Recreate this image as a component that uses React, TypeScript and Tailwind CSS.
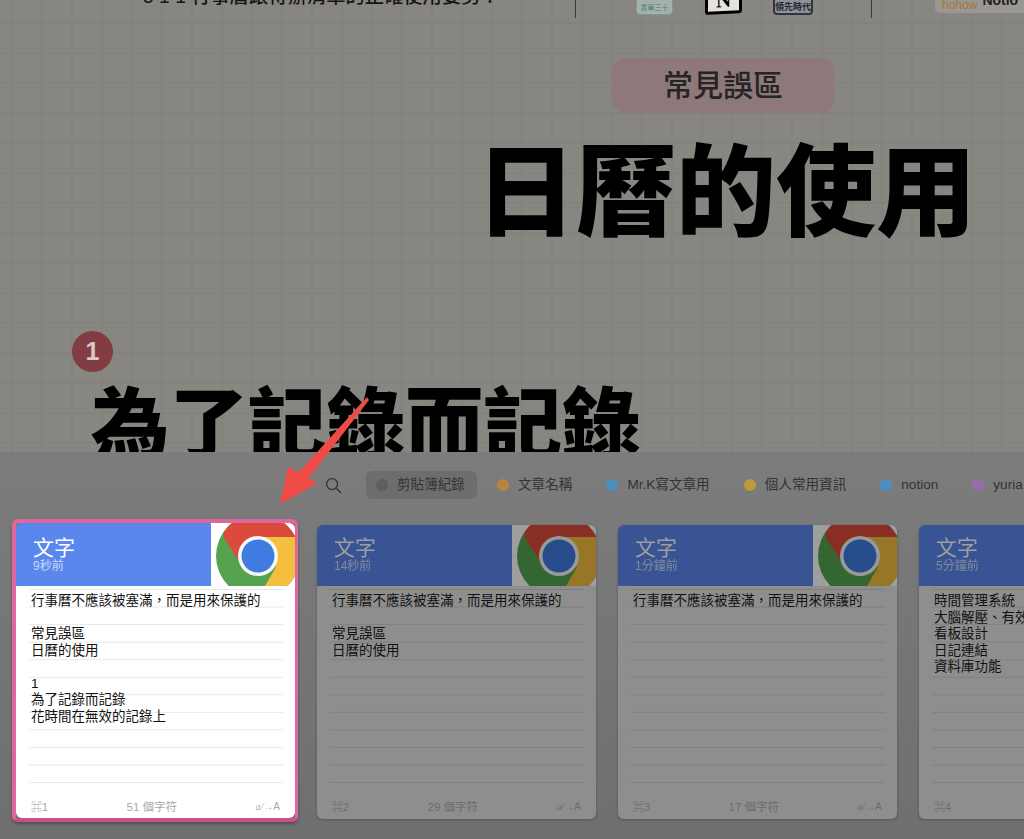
const SANS = 'font-["Liberation_Sans","Noto_Sans_CJK_TC",sans-serif]'

const TABS = [
  { label: '文章名稱', color: 'bg-[#b8833b]' },
  { label: 'Mr.K寫文章用', color: 'bg-[#4a8fbd]' },
  { label: '個人常用資訊', color: 'bg-[#bd9a3a]' },
  { label: 'notion', color: 'bg-[#4a8fc4]' },
  { label: 'yuria', color: 'bg-[#9a6aab]' },
]

const CARDS = [
  { key: '⌘1', time: '9秒前', count: '51 個字符', lines: ['行事曆不應該被塞滿，而是用來保護的', '', '常見誤區', '日曆的使用', '', '1', '為了記錄而記錄', '花時間在無效的記錄上'] },
  { key: '⌘2', time: '14秒前', count: '29 個字符', lines: ['行事曆不應該被塞滿，而是用來保護的', '', '常見誤區', '日曆的使用'] },
  { key: '⌘3', time: '1分鐘前', count: '17 個字符', lines: ['行事曆不應該被塞滿，而是用來保護的'] },
  { key: '⌘4', time: '5分鐘前', count: '', lines: ['時間管理系統', '大腦解壓、有效', '看板設計', '日記連結', '資料庫功能'] },
]

function ChromeLogo({ active, id }: { active?: boolean; id: string }) {
  return (
    <svg viewBox={active ? '0 -2 84 63' : '0 0 84 61'} className="h-full w-[84px] shrink-0 bg-white">
      <defs>
        <clipPath id={id}>
          <circle cx="47" cy="31" r="42" />
        </clipPath>
      </defs>
      <g clipPath={`url(#${id})`}>
        <rect x="0" y="-12" width="94" height="86" fill="#55a34f" />
        <path d="M13 13 L33 44 L47 12 H94 V-20 H13 Z" fill="#db4b3c" />
        <path d="M47 12 H94 V61 H54 L65 42 Z" fill="#f4bf3f" />
      </g>
      <circle cx="47" cy="31" r="20" fill="#f7f7f7" />
      <circle cx="47" cy="31" r="16.5" fill="#3f7be0" />
    </svg>
  )
}

function Card({ card, active }: { card: (typeof CARDS)[number]; active?: boolean }) {
  return (
    <div
      className={
        active
          ? 'w-[286px] shrink-0 self-start rounded-[6px] border-y-[4px] border-l-[4px] border-r-[3px] border-[#e0669f] border-b-[#c94f88] shadow-[0_2px_3px_rgba(0,0,0,0.3)]'
          : 'mt-[6px] w-[279px] shrink-0 self-start rounded-[6px] shadow-[0_1px_3px_rgba(0,0,0,0.25)]'
      }
    >
      <div className={`flex overflow-hidden rounded-t-[6px] bg-[#5a87ee] ${active ? 'h-[63px]' : 'h-[61px] brightness-[.62]'}`}>
        <div className={`flex-1 pl-[17px] ${active ? 'pt-[13px]' : 'pt-[11px]'}`}>
          <div className="text-[21px] leading-[24px] text-white">文字</div>
          <div className="text-[12px] leading-[13px] text-white/70">{card.time}</div>
        </div>
        <ChromeLogo active={active} id={`chrome-${card.key}`} />
      </div>
      <div className={`flex flex-col rounded-b-[6px] pl-[13px] pr-[12px] ${active ? 'h-[232px] bg-white' : 'h-[233px] bg-[#8e8e8e]'}`}>
        <div
          className={`h-[197px] pl-[2px] pt-[7px] text-[13.5px] leading-[16.5px] text-[#111] bg-[size:100%_17.55px] bg-[position:0_4px] ${
            active
              ? 'bg-[linear-gradient(to_bottom,transparent_17px,#e8e8e8_17px)]'
              : 'bg-[linear-gradient(to_bottom,transparent_17px,#808080_17px)]'
          }`}
        >
          {card.lines.map((line, i) => (
            <div key={i} className="h-[16.5px] whitespace-nowrap">
              {line}
            </div>
          ))}
        </div>
        <div className={`mt-[17px] flex items-center justify-between pl-[2px] pr-[3px] text-[11px] leading-[14px] ${active ? 'text-[#a8a8a8]' : 'text-[#6c6c6c]'}`}>
          <span>{card.key}</span>
          <span className="text-[11.5px]">{card.count}</span>
          <span className="text-[10px]">
            <span className="font-['Liberation_Serif',serif] italic">a/</span>→A
          </span>
        </div>
      </div>
    </div>
  )
}

export default function App() {
  return (
    <div className={`relative flex h-[839px] w-[1024px] flex-col overflow-hidden bg-[#878680] ${SANS}`}>
      {/* slide behind the clipboard panel */}
      <div className="h-[452px] shrink-0 overflow-hidden bg-[linear-gradient(to_right,#83827d_2px,transparent_2px),linear-gradient(to_bottom,#83827d_2px,transparent_2px)] bg-[size:30px_30px] bg-[position:11px_22px]">
        <div className="flex h-[18px] items-start">
          <div className="-mt-[15px] ml-[143px] w-[432px] whitespace-nowrap text-[19.3px] font-medium leading-[24px] text-[#151515]">5 1 1 行事曆跟待辦清單的正確使用姿勢？</div>
          <div className="flex h-[18px] w-[297px] items-start border-x border-[#3a3936]">
            <div className="-mt-[10px] ml-[60px] h-[25px] w-[37px] rounded-[4px] border border-[#7f9996] bg-[#a4b1ab] pt-[12px] text-center text-[7px] leading-[10px] text-[#4f7a70]">書單三十</div>
            <div className="-mt-[10px] ml-[32px] h-[24px] w-[37px] -skew-y-3 rounded-[3px] border-[3px] border-black bg-[#e6e3dc] text-center font-['Liberation_Serif',serif] text-[21px] font-bold leading-[15px] text-black">N</div>
            <div className="-mt-[10px] ml-[31px] h-[25px] w-[40px] rounded-[4px] border-2 border-[#33343a] bg-[#8f929c] pt-[10px] text-center text-[9px] font-bold leading-[11px] text-[#26272c]">領先時代</div>
          </div>
          <div className="-mt-[7px] ml-[63px] flex h-[20px] flex-1 items-start rounded-bl-[5px] bg-[#9a9892] pl-[7px] text-[12px] leading-[24px] text-[#a8763a]">
            hohow<span className="ml-[5px] text-[14px] font-bold leading-[14px] text-[#222]">Notio</span>
          </div>
        </div>

        <div className="ml-[612px] mt-[40px] flex h-[55px] w-[222px] items-center justify-center rounded-[14px] bg-[#8f787a] text-[30px] font-medium text-[#262525]">
          常見誤區
        </div>

        <div className="ml-[476px] mt-[25px] whitespace-nowrap text-[100px] font-black leading-[110px] text-black">日曆的使用</div>

        <div className="ml-[72px] mt-[83px] flex size-[41px] items-center justify-center rounded-full bg-[#833c42] text-[25px] font-bold leading-none text-[#d9c8c8]">1</div>
        <div className="ml-[91px] mt-[11px] whitespace-nowrap text-[78.5px] font-black leading-[86px] text-black">為了記錄而記錄</div>
      </div>

      {/* clipboard panel */}
      <div className="flex-1 bg-[linear-gradient(to_bottom,#7c7c7c,#6f6f6f)]">
        <div className="ml-[325px] mt-[19px] flex h-[28px] items-center text-[13.6px] text-[#333]">
          <svg viewBox="0 0 18 18" className="size-[17px] shrink-0" fill="none" stroke="#333" strokeWidth="1.4">
            <circle cx="7.5" cy="7.5" r="5.8" />
            <path d="M12 12 L17 17" />
          </svg>
          <div className="ml-[24px] flex h-[28px] w-[111px] shrink-0 items-center rounded-[6px] bg-[#6d6d6d] pl-[10px]">
            <span className="mr-[9px] size-[12px] shrink-0 rounded-full bg-[#5e5e5e]" />
            剪貼簿紀錄
          </div>
          <div className="ml-[20px] flex shrink-0 gap-[34px]">
            {TABS.map((tab) => (
              <div key={tab.label} className="flex shrink-0 items-center whitespace-nowrap">
                <span className={`mr-[9px] size-[12px] shrink-0 rounded-full ${tab.color}`} />
                {tab.label}
              </div>
            ))}
          </div>
        </div>

        <div className="ml-[12px] mt-[20px] flex gap-[19px]">
          <Card card={CARDS[0]} active />
          <div className="flex gap-[22px]">
            {CARDS.slice(1).map((card) => (
              <Card key={card.key} card={card} />
            ))}
          </div>
        </div>
      </div>

      {/* red annotation arrow */}
      <svg viewBox="0 0 1024 839" className="pointer-events-none absolute inset-0 size-full">
        <path d="M367 397 L369 400 L308 479 L318 483 L280 504 L288 467 L299 472 Z" fill="#ef4a45" />
      </svg>
    </div>
  )
}
